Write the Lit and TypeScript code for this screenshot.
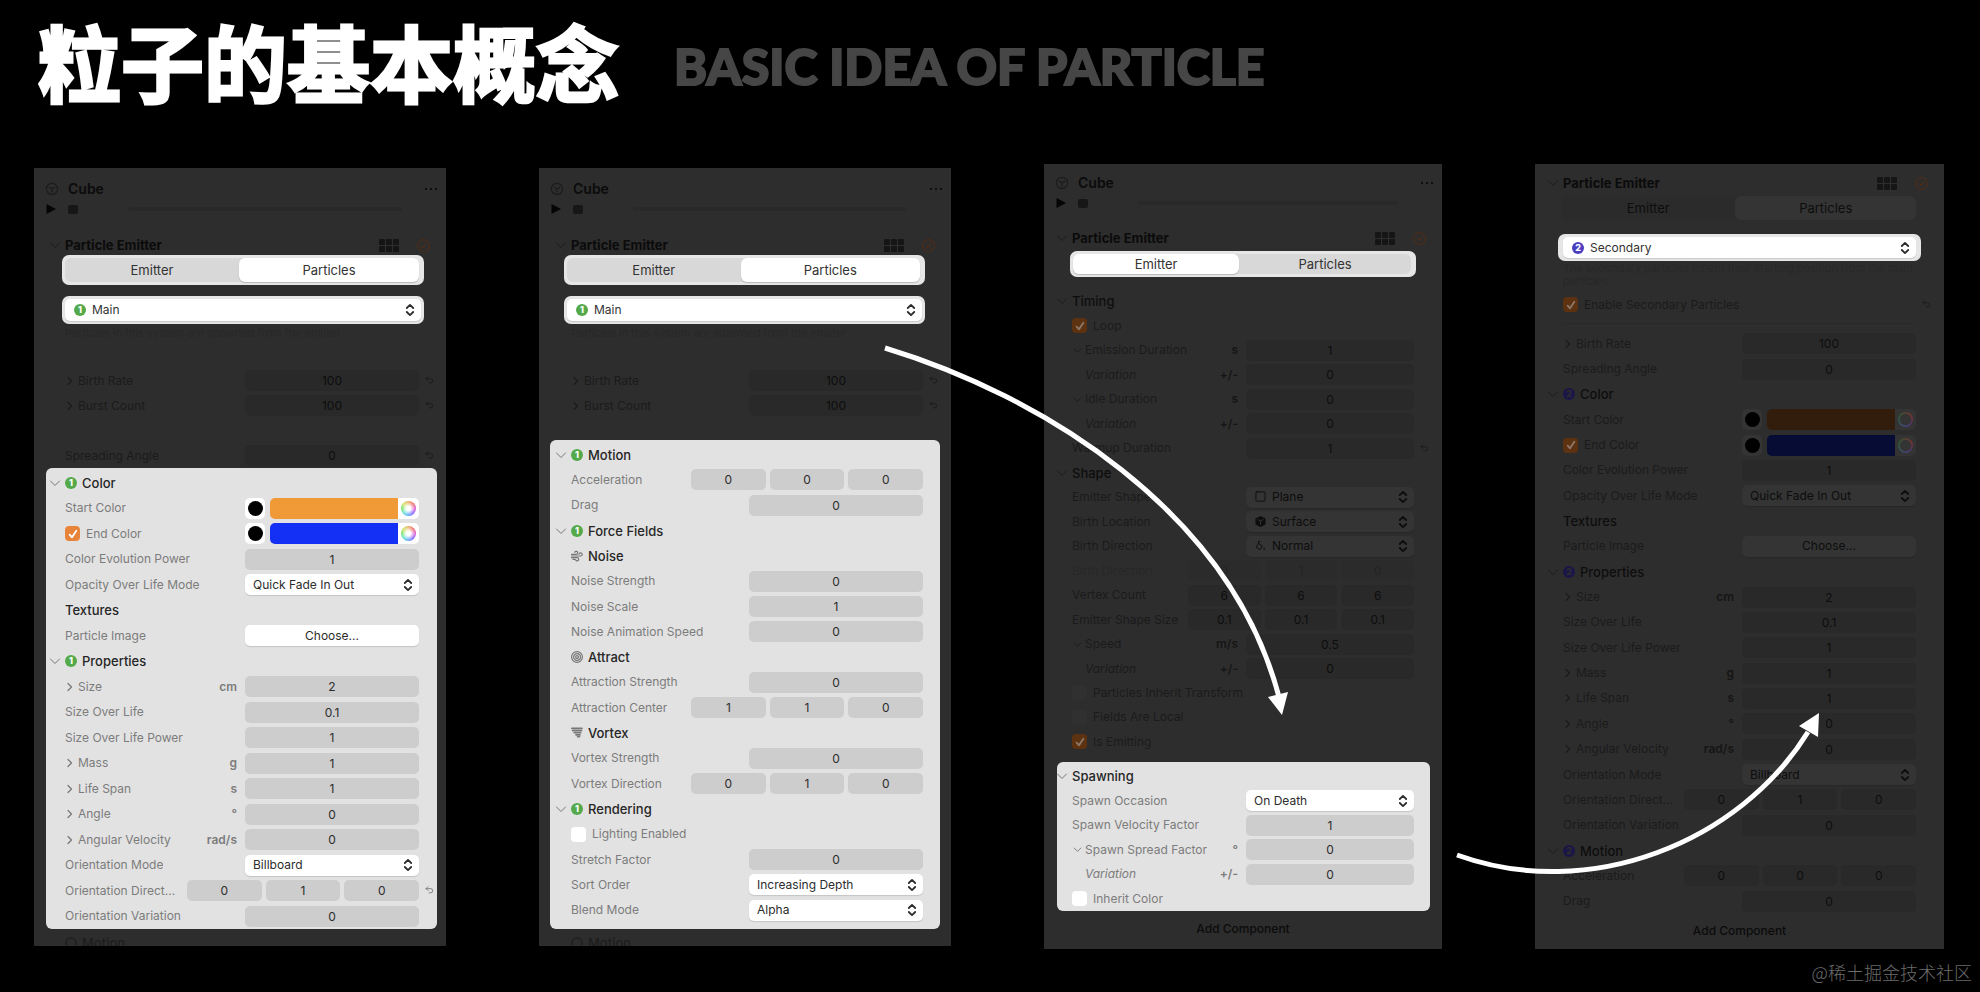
import { LitElement, html, svg, css, nothing } from "lit";
import { customElement } from "lit/decorators.js";
import { classMap } from "lit/directives/class-map.js";

type Row =
  | { t: "head"; label: string; badge?: string; icon?: string; chev?: boolean }
  | { t: "field"; label: string; v: string[]; sub?: "right" | "down"; unit?: string; italic?: boolean; undo?: boolean; faint?: boolean }
  | { t: "select"; label: string; v: string; icon?: string }
  | { t: "button"; label: string; v: string }
  | { t: "color"; label: string; v: string; check?: boolean }
  | { t: "check"; label: string; on: boolean; undo?: boolean }
  | { t: "blank" };

const head = (label: string, o: object = {}): Row => ({ t: "head", label, ...o });
const field = (label: string, v: string | string[], o: object = {}): Row => ({
  t: "field", label, v: Array.isArray(v) ? v : [v], ...o,
});
const select = (label: string, v: string, icon?: string): Row => ({ t: "select", label, v, icon });
const check = (label: string, on: boolean, undo = false): Row => ({ t: "check", label, on, undo });

const right = { sub: "right" };
const green = { badge: "1", chev: true };
const violet = { badge: "2", chev: true };

const properties = (badge: object, undo: boolean): Row[] => [
  head("Properties", badge),
  field("Size", "2", { ...right, unit: "cm" }),
  field("Size Over Life", "0.1"),
  field("Size Over Life Power", "1"),
  field("Mass", "1", { ...right, unit: "g" }),
  field("Life Span", "1", { ...right, unit: "s" }),
  field("Angle", "0", { ...right, unit: "°" }),
  field("Angular Velocity", "0", { ...right, unit: "rad/s" }),
  select("Orientation Mode", "Billboard"),
  field("Orientation Direct...", ["0", "1", "0"], { undo }),
  field("Orientation Variation", "0"),
];

const colors = (badge: object, start: string, end: string): Row[] => [
  head("Color", badge),
  { t: "color", label: "Start Color", v: start },
  { t: "color", label: "End Color", v: end, check: true },
  field("Color Evolution Power", "1"),
  select("Opacity Over Life Mode", "Quick Fade In Out"),
  head("Textures"),
  { t: "button", label: "Particle Image", v: "Choose..." },
];

const mainCard: Row[] = [...colors(green, "#f09a37", "#1430f5"), ...properties(green, true)];

const motionCard: Row[] = [
  head("Motion", green),
  field("Acceleration", ["0", "0", "0"]),
  field("Drag", "0"),
  head("Force Fields", green),
  head("Noise", { icon: "wind" }),
  field("Noise Strength", "0"),
  field("Noise Scale", "1"),
  field("Noise Animation Speed", "0"),
  head("Attract", { icon: "target" }),
  field("Attraction Strength", "0"),
  field("Attraction Center", ["1", "1", "0"]),
  head("Vortex", { icon: "tornado" }),
  field("Vortex Strength", "0"),
  field("Vortex Direction", ["0", "1", "0"]),
  head("Rendering", green),
  check("Lighting Enabled", false),
  field("Stretch Factor", "0"),
  select("Sort Order", "Increasing Depth"),
  select("Blend Mode", "Alpha"),
];

const emitterRows: Row[] = [
  head("Timing", { chev: true }),
  check("Loop", true),
  field("Emission Duration", "1", { sub: "down", unit: "s" }),
  field("Variation", "0", { italic: true, unit: "+/-" }),
  field("Idle Duration", "0", { sub: "down", unit: "s" }),
  field("Variation", "0", { italic: true, unit: "+/-" }),
  field("Warmup Duration", "1", { undo: true }),
  head("Shape", { chev: true }),
  select("Emitter Shape", "Plane", "square"),
  select("Birth Location", "Surface", "cube"),
  select("Birth Direction", "Normal", "paint"),
  field("Birth Direction", ["0", "1", "0"], { faint: true }),
  field("Vertex Count", ["6", "6", "6"]),
  field("Emitter Shape Size", ["0.1", "0.1", "0.1"]),
  field("Speed", "0.5", { sub: "down", unit: "m/s" }),
  field("Variation", "0", { italic: true, unit: "+/-" }),
  check("Particles Inherit Transform", false),
  check("Fields Are Local", false),
  check("Is Emitting", true),
];

const spawnCard: Row[] = [
  head("Spawning", { chev: true }),
  select("Spawn Occasion", "On Death"),
  field("Spawn Velocity Factor", "1"),
  field("Spawn Spread Factor", "0", { sub: "down", unit: "°" }),
  field("Variation", "0", { italic: true, unit: "+/-" }),
  check("Inherit Color", false),
];

const secondaryRows: Row[] = [
  field("Birth Rate", "100", right),
  field("Spreading Angle", "0"),
  ...colors(violet, "#321d0d", "#070c35"),
  ...properties(violet, false),
  head("Motion", violet),
  field("Acceleration", ["0", "0", "0"]),
  field("Drag", "0"),
];

const birthRows: Row[] = [
  field("Birth Rate", "100", { ...right, undo: true }),
  field("Burst Count", "100", { ...right, undo: true }),
];

const glyphs: Record<string, unknown> = {
  down: svg`<path d="M1.5 4 6 8.5 10.5 4" />`,
  right: svg`<path d="M4 2.5 7.5 6 4 9.5" />`,
  updown: svg`<path d="M2.8 4 6 .9 9.2 4M2.8 8 6 11.1 9.2 8" />`,
  undo: svg`<path d="M4 1 1.5 3.5 4 6M1.5 3.5H7.5a2.8 2.8 0 0 1 0 5.6H5.5" />`,
  wind: svg`<path d="M.5 4.3H5.2A1.5 1.5 0 1 0 3.8 2.3M.5 6H9.6A1.6 1.6 0 1 0 8 4.2M.5 7.7H6.2A1.6 1.6 0 1 1 4.6 9.8M2 9.4h2" />`,
  target: svg`<circle cx="6" cy="6" r="5.4" /><circle cx="6" cy="6" r="3.4" /><circle cx="6" cy="6" r="1.4" />`,
  tornado: svg`<path stroke-width="1.6" d="M.8 1.4H11M1.6 3.6H10.6M3.2 5.8H9.8M5 7.9H9M6.6 9.8H8.6" />`,
  square: svg`<rect x="1" y="1" width="10" height="10" rx="1" />`,
  cube: svg`<path fill="currentColor" stroke="none" d="M6 0 11.5 2.8V9.2L6 12 .5 9.2V2.8Z" /><path class="cut" d="M3 3.8 6 5.4 9 3.8M6 5.4V9" />`,
  paint: svg`<path d="M4 4 8 6.5 5.5 10.5 1.5 8ZM4 4V1.5M4 1.5h1.5M10 8.5v2" />`,
  box: svg`<circle cx="6" cy="6" r="5.6" /><path d="M3.4 4.4 6 5.8 8.6 4.4M6 5.8V9" />`,
  ok: svg`<circle cx="6" cy="6" r="5.4" /><path d="M3.8 6.2 5.4 7.8 8.4 4.4" />`,
};

const icon = (name: string, cls = "") =>
  html`<svg class="icon ${cls}" viewBox="0 0 12 12" aria-hidden="true">${glyphs[name]}</svg>`;

@customElement("app-root")
export class AppRoot extends LitElement {
  private count = 0;

  static styles = css`
    :host {
      display: block;
      background: #000;
      font-family: Inter, "Noto Sans", sans-serif;
      font-size: 12px;
      line-height: 16px;
    }
    * { box-sizing: border-box; }
    button, input, select {
      font: inherit;
      color: inherit;
      border: 0;
      padding: 0;
      margin: 0;
      background: none;
      appearance: none;
      outline: none;
      min-width: 0;
    }
    .page {
      position: relative;
      min-height: 100vh;
      display: flex;
      flex-direction: column;
      overflow: hidden;
    }
    .title {
      display: flex;
      align-items: flex-start;
      gap: 55px;
      height: 164px;
      padding: 10px 38px 0;
      color: #fff;
    }
    h1, h2, h3, p { margin: 0; }
    h1 {
      font: 700 83px/100px "Noto Sans CJK SC", sans-serif;
      -webkit-text-stroke: 3px #fff;
      white-space: nowrap;
    }
    .english {
      font: 900 50px/112px Lato, sans-serif;
      color: #464646;
      -webkit-text-stroke: 2px #464646;
      white-space: nowrap;
    }
    .panels {
      flex: 1;
      display: grid;
      grid-template-columns: 412fr 412fr 398fr 409fr;
      gap: 93px;
      padding: 0 36px 0 34px;
    }
    .panel {
      display: flex;
      flex-direction: column;
      min-width: 0;
      overflow: hidden;
      background: #2d2d2d;
      padding: 6px 0 0;
      --left: 31px;
      --right: 27px;
      --card-left: 12px;
      --card-right: 9px;
      --field: 174px;
      --triple: 232px;
      --bar-left: 28px;
      --bar-right: 22px;
    }
    .short { margin: 4px 0 3px; padding: 8px 0 0; }
    .motion {
      --left: 32px; --right: 28px; --card-left: 11px; --card-right: 11px;
      --bar-left: 25px; --bar-right: 26px;
    }
    .emitter {
      --left: 28px; --right: 28px; --card-left: 13px; --card-right: 12px;
      --field: 168px; --triple: 226px; --bar-left: 26px; --bar-right: 26px;
    }
    .secondary {
      --left: 28px; --right: 28px;
      --bar-left: 23px; --bar-right: 23px;
      padding-top: 9px;
    }

    .dim {
      --head: #0d0d0d; --label: #1b1b1b; --text: #0d0d0d; --unit: #151515;
      --well: #292929; --white: #343434; --box: #303030; --accent: #5d3211; --tick: #8d7768;
      --badge: #1b1648; --one: #2d2d2d; --mark: #1b1b1b;
      --wheel: radial-gradient(#343434 48%, #34343400 60%), conic-gradient(#543, #733, #536, #447, #355, #353, #543);
    }
    .lit {
      --head: #262626; --label: #7c7c7c; --text: #2c2c2c; --unit: #7c7c7c;
      --well: #cdcdcd; --white: #fff; --box: #fff; --accent: #e8833a; --tick: #fff;
      --badge: #54a94b; --one: #fff; --mark: #777;
      --wheel: radial-gradient(#fff 20%, #fff0 75%),
        conic-gradient(#e8a04c, #e55, #d4c, #74f, #49f, #4dc, #6d5, #cd4, #e8a04c);
    }

    .icon {
      width: 12px;
      height: 12px;
      flex: none;
      fill: none;
      stroke: currentColor;
      stroke-width: 1.2;
      stroke-linecap: round;
      stroke-linejoin: round;
      overflow: visible;
    }
    .cut { stroke: #333; }
    .cube-row, .play-row { display: flex; align-items: center; padding: 0 4px 0 12px; }
    .cube-row { height: 26px; gap: 10px; color: #1c1c1c; }
    .cube-row h3 { flex: 1; font: 600 14px/18px Inter, sans-serif; color: #0b0b0b; }
    .dots { display: flex; gap: 3px; width: 22px; height: 16px; align-items: center; justify-content: center; }
    .dots i { width: 2px; height: 2px; border-radius: 1px; background: #050505; }
    .play-row { height: 14px; gap: 12px; margin-bottom: 19px; }
    .emitter .play-row { margin-bottom: 18px; }
    .play { width: 10px; height: 10px; fill: #050505; }
    .stop { width: 10px; height: 9px; border-radius: 2px; background: #171717; }
    .track { flex: 1; height: 4px; margin: 0 40px 0 38px; border-radius: 2px; background: #292929; }
    .pe-row {
      display: flex;
      align-items: center;
      height: 20px;
      padding: 0 16px 0 var(--left);
      color: #161616;
    }
    .pe-row h3 { flex: 1; font: 700 13px/18px Inter, sans-serif; color: #0b0b0b; }
    .tiles { display: grid; grid-template-columns: repeat(3, 6px); gap: 1px; margin-right: 18px; }
    .tiles i { height: 6px; border-radius: 1px; background: #151515; }
    .ok { width: 13px; height: 13px; color: #4a2d1b; }
    .chev { margin: 0 4px 0 -16px; color: var(--mark); }
    .row .chev, .pe-row .chev { stroke-width: 1; }

    .bar {
      margin: 0 var(--bar-right) 0 var(--bar-left);
      border-radius: 7px;
      background: #e6e6e6;
      padding: 3px;
    }
    .seg { display: flex; height: 30px; padding: 3px 5px 3px 3px; font-size: 13px; color: #333; }
    .seg .in { flex: 1; display: flex; border-radius: 6px; background: #d8d8d8; }
    .seg button { flex: 29; border-radius: 6px; }
    .seg button + button { flex: 30; }
    .seg .on { background: #fff; box-shadow: 0 1px 1px #0003; }
    .emitter .seg { height: 26px; margin-top: 3px; }
    .seg.off { background: none; color: #0d0d0d; }
    .seg.off .in { background: #2b2b2b; }
    .seg.off .on { background: #343434; box-shadow: none; }
    .pick { height: 28px; margin-top: 11px; }
    .pick .pop { width: 100%; height: 22px; }
    .pick .pop select { padding-left: 27px; color: #333; }
    .pick .badge { left: 9px; }
    .secondary .pick { height: 27px; padding: 3px 5px; }
    .secondary .pick .pop { height: 21px; }
    .hint {
      height: 18px;
      margin: 0 20px 26px var(--left);
      font-size: 11px;
      line-height: 18px;
      color: #282828;
      white-space: nowrap;
      overflow: hidden;
    }
    .hint.two { height: 26px; margin-bottom: 4px; line-height: 13px; white-space: normal; margin-top: 1px; }

    .rows { display: flex; flex-direction: column; }
    .rows .row { height: 25px; }
    .stretch { flex: var(--n) 1 0; }
    .stretch .row { flex: 1 1 24px; height: auto; }
    .card {
      flex: var(--n) 1 0;
      display: flex;
      flex-direction: column;
      margin: 0 var(--card-right) 0 var(--card-left);
      padding: 2px 0 6px;
      border-radius: 6px;
      background: #e2e2e2;
      overflow: hidden;
    }
    .card .row {
      flex: 1 1 24px;
      padding-left: calc(var(--left) - var(--card-left));
      padding-right: calc(var(--right) - var(--card-right));
    }
    .card.flush { padding-bottom: 0; }
    .row {
      display: flex;
      align-items: center;
      min-height: 0;
      padding: 0 var(--right) 0 var(--left);
      color: var(--label);
    }
    .row h3 { font: 500 13px/18px Inter, sans-serif; color: var(--head); display: flex; align-items: center; gap: 5px; }
    .row h3 .icon { color: var(--mark); }
    .name { flex: 1; min-width: 0; white-space: nowrap; display: flex; align-items: center; gap: 6px; }
    .name label { overflow: hidden; text-overflow: ellipsis; }
    .sub { margin: 0 -4px 0 -1px; color: var(--mark); }
    .sub.small { width: 9px; height: 9px; margin: 0 -3px 0 1px; }
    .italic { font-style: italic; padding-left: 13px; }
    .unit { margin-right: 8px; font-weight: 600; color: var(--unit); }
    .ctl { width: var(--field); display: flex; gap: 4px; flex: none; }
    .ctl.three { width: var(--triple); }
    .well {
      flex: 1;
      width: 0;
      height: 21px;
      border-radius: 5px;
      background: var(--well);
      color: var(--text);
      text-align: center;
    }
    .faint { opacity: .3; }
    .undo { width: 9px; height: 9px; margin: 0 -15px 0 6px; color: var(--mark); }
    .pop { position: relative; width: 100%; height: 21px; display: flex; }
    .pop select {
      width: 100%;
      padding: 0 24px 0 8px;
      border-radius: 5px;
      background: var(--white);
      color: var(--text);
      box-shadow: 0 1px 1px #00000022;
    }
    .pop .has { padding-left: 26px; }
    .pop .icon { position: absolute; right: 5px; top: calc(50% - 6px); color: var(--text); stroke-width: 1.8; pointer-events: none; }
    .pop .lead { right: auto; left: 9px; stroke-width: 1; width: 11px; height: 11px; }
    .pop .badge { position: absolute; top: calc(50% - 6px); pointer-events: none; }
    .push {
      flex: 1;
      height: 21px;
      border-radius: 5px;
      background: var(--white);
      color: var(--text);
      box-shadow: 0 1px 1px #00000022;
    }
    .badge {
      width: 12px;
      height: 12px;
      border-radius: 6px;
      background: var(--badge);
      color: var(--one);
      font: 800 9px/12px Inter, sans-serif;
      text-align: center;
    }
    .badge.violet { background: #4b3fc0; }
    .swatch {
      width: 20px;
      height: 21px;
      border-radius: 5px;
      background: var(--white);
      display: grid;
      place-items: center;
    }
    .swatch i { width: 15px; height: 15px; border-radius: 8px; background: #000; }
    .color { flex: 1; display: flex; height: 21px; margin-left: 1px; }
    .color input { flex: 1; height: 21px; width: 0; }
    .color input::-webkit-color-swatch-wrapper { padding: 0; }
    .color input::-webkit-color-swatch { border: 0; border-radius: 5px 0 0 5px; }
    .wheel { width: 21px; border-radius: 0 5px 5px 0; background: var(--white); display: grid; place-items: center; }
    .wheel i { width: 15px; height: 15px; border-radius: 8px; background: var(--wheel); }
    .tick {
      width: 15px;
      height: 15px;
      border-radius: 4px;
      background: var(--box);
      flex: none;
      display: grid;
      place-items: center;
    }
    .tick input { grid-area: 1 / 1; width: 15px; height: 15px; border-radius: 4px; }
    .tick input:checked { background: var(--accent); }
    .tick .icon { grid-area: 1 / 1; width: 10px; height: 10px; color: var(--tick); stroke-width: 2.2; pointer-events: none; }

    .rest { height: 17px; overflow: hidden; padding: 5px 0 0 var(--left); color: #1d1d1d; font: 500 13px/18px Inter, sans-serif; display: flex; gap: 5px; }
    .rest i { width: 12px; height: 12px; border-radius: 6px; border: 2px solid #222; margin-top: 3px; }
    .add { height: 38px; padding-bottom: 2px; font-weight: 500; color: #0b0b0b; }
    .secondary .add { height: 35px; }
    .gap { height: 22px; }
    .lead-space { height: 12px; }
    .space { height: 8px; }
    .rule { height: 1px; margin: 6px 28px 7px; background: #292929; }
    footer {
      height: 43px;
      padding: 10px 8px 0 0;
      text-align: right;
      font: 300 18px/26px "Noto Sans CJK SC", sans-serif;
      color: #6c6c6c;
    }
    .arrows { position: absolute; inset: 0; width: 100%; height: 100%; pointer-events: none; fill: #fff; }
    .arrows .line { fill: none; stroke: #fff; stroke-width: 5; }
  `;

  private id_() {
    return `c${++this.count}`;
  }

  private select(id: string, value: string, lead?: string) {
    return html`<span class="pop">
      <select id=${id} class=${classMap({ has: !!lead })}><option>${value}</option></select>
      ${lead ? icon(lead, "lead") : nothing}${icon("updown")}
    </span>`;
  }

  private tick(id: string, on: boolean) {
    return html`<span class="tick"><input type="checkbox" id=${id} aria-label="Enabled" .checked=${on} />${on
      ? html`<svg class="icon" viewBox="0 0 12 12" aria-hidden="true"><path d="M2 6.8 4.8 10 10 2" /></svg>`
      : nothing}</span>`;
  }

  private undo() {
    return icon("undo", "undo");
  }

  private row(r: Row) {
    const id = this.id_();
    switch (r.t) {
      case "blank":
        return html`<div class="row"></div>`;
      case "head":
        return html`<div class="row">
          ${r.chev ? icon("down", "chev") : nothing}
          <h3>
            ${r.badge ? html`<span class="badge">${r.badge}</span>` : nothing}${r.icon ? icon(r.icon) : nothing}${r.label}
          </h3>
        </div>`;
      case "field":
        return html`<div class=${classMap({ row: true, faint: !!r.faint })}>
          <span class="name">${r.sub ? icon(r.sub, r.sub === "down" ? "sub small" : "sub") : nothing}<label for=${id} class=${classMap({ italic: !!r.italic })}>${r.label}</label></span>
          ${r.unit ? html`<span class="unit">${r.unit}</span>` : nothing}
          <span class=${classMap({ ctl: true, three: r.v.length > 1 })}>
            ${r.v.map((v, i) => html`<input class="well" type="text" id=${i ? `${id}-${i}` : id} aria-label="${r.label} ${i + 1}" .value=${v} />`)}
          </span>
          ${r.undo ? this.undo() : nothing}
        </div>`;
      case "select":
        return html`<div class="row">
          <span class="name"><label for=${id}>${r.label}</label></span>
          <span class="ctl">${this.select(id, r.v, r.icon)}</span>
        </div>`;
      case "button":
        return html`<div class="row">
          <span class="name"><label for=${id}>${r.label}</label></span>
          <span class="ctl"><button class="push" id=${id}>${r.v}</button></span>
        </div>`;
      case "color":
        return html`<div class="row">
          <span class="name">${r.check ? this.tick(`${id}-on`, true) : nothing}<label for=${id}>${r.label}</label></span>
          <span class="ctl">
            <button class="swatch" aria-label="${r.label} preset"><i></i></button>
            <span class="color">
              <input type="color" id=${id} .value=${r.v} />
              <button class="wheel" aria-label="${r.label} wheel"><i></i></button>
            </span>
          </span>
        </div>`;
      case "check":
        return html`<div class="row">
          <span class="name">${this.tick(id, r.on)}<label for=${id}>${r.label}</label></span>
          ${r.undo ? this.undo() : nothing}
        </div>`;
    }
  }

  private list(rows: Row[], cls: string) {
    return html`<div class=${cls} style="--n:${rows.length}">${rows.map((r) => this.row(r))}</div>`;
  }

  private cubeHead() {
    return html`
      <div class="cube-row">
        ${icon("box")}
        <h3>Cube</h3>
        <button class="dots" aria-label="More"><i></i><i></i><i></i></button>
      </div>
      <div class="play-row">
        <svg class="play" viewBox="0 0 10 10" aria-hidden="true"><path d="M.5 0 10 5 .5 10Z" /></svg>
        <span class="stop"></span><span class="track"></span>
      </div>`;
  }

  private emitterHead() {
    return html`<div class="pe-row">
      ${icon("down", "chev")}
      <h3>Particle Emitter</h3>
      <span class="tiles"><i></i><i></i><i></i><i></i><i></i><i></i></span>
      ${icon("ok", "ok")}
    </div>`;
  }

  private tabs(active: number, off = false) {
    return html`<div class=${classMap({ bar: true, seg: true, off })}>
      <div class="in">
        ${["Emitter", "Particles"].map((t, i) => html`<button class=${classMap({ on: i === active })}>${t}</button>`)}
      </div>
    </div>`;
  }

  private picker(n: string, value: string) {
    return html`<div class="bar pick lit">
      <span class="pop">
        <select aria-label="Particle set"><option>${value}</option></select>
        <span class=${classMap({ badge: true, violet: n === "2" })}>${n}</span>
        ${icon("updown")}
      </span>
    </div>`;
  }

  render() {
    this.count = 0;
    const hint = "Particles in this system are spawned from the emitter";
    return html`
      <div class="page">
        <header class="title">
          <h1>粒子的基本概念</h1>
          <span class="english">BASIC IDEA OF PARTICLE</span>
        </header>
        <main class="panels">
          <section class="panel short dim">
            ${this.cubeHead()} ${this.emitterHead()} ${this.tabs(1)} ${this.picker("1", "Main")}
            <p class="hint">${hint}</p>
            ${this.list([...birthRows, { t: "blank" }, field("Spreading Angle", "0", { undo: true })], "rows")}
            ${this.list(mainCard, "card flush lit")}
            <div class="rest"><i></i>Motion</div>
          </section>
          <section class="panel short motion dim">
            ${this.cubeHead()} ${this.emitterHead()} ${this.tabs(1)} ${this.picker("1", "Main")}
            <p class="hint">${hint}</p>
            ${this.list(birthRows, "rows")}
            <div class="gap"></div>
            ${this.list(motionCard, "card lit")}
            <div class="rest"><i></i>Motion</div>
          </section>
          <section class="panel emitter dim">
            ${this.cubeHead()} ${this.emitterHead()} ${this.tabs(0)}
            <div class="lead-space"></div>
            ${this.list(emitterRows, "rows stretch")}
            <div class="space"></div>
            ${this.list(spawnCard, "card flush lit")}
            <button class="add">Add Component</button>
          </section>
          <section class="panel secondary dim">
            ${this.emitterHead()} ${this.tabs(1, true)} ${this.picker("2", "Secondary")}
            <p class="hint two">The secondary particles inherit their starting position from the main particles.</p>
            ${this.list([check("Enable Secondary Particles", true, true)], "rows")}
            <div class="rule"></div>
            ${this.list(secondaryRows, "rows stretch")}
            <button class="add">Add Component</button>
          </section>
        </main>
        <footer>@稀土掘金技术社区</footer>
        <svg class="arrows" viewBox="0 0 1980 992" preserveAspectRatio="none" aria-hidden="true">
          <path class="line" d="M885 348C1040 395 1230 510 1279 697" />
          <path d="M1268 697 1288 692 1282 715Z" />
          <path class="line" d="M1457 855C1590 903 1740 842 1808 732" />
          <path d="M1799 726 1818 737 1819 713Z" />
        </svg>
      </div>
    `;
  }
}
